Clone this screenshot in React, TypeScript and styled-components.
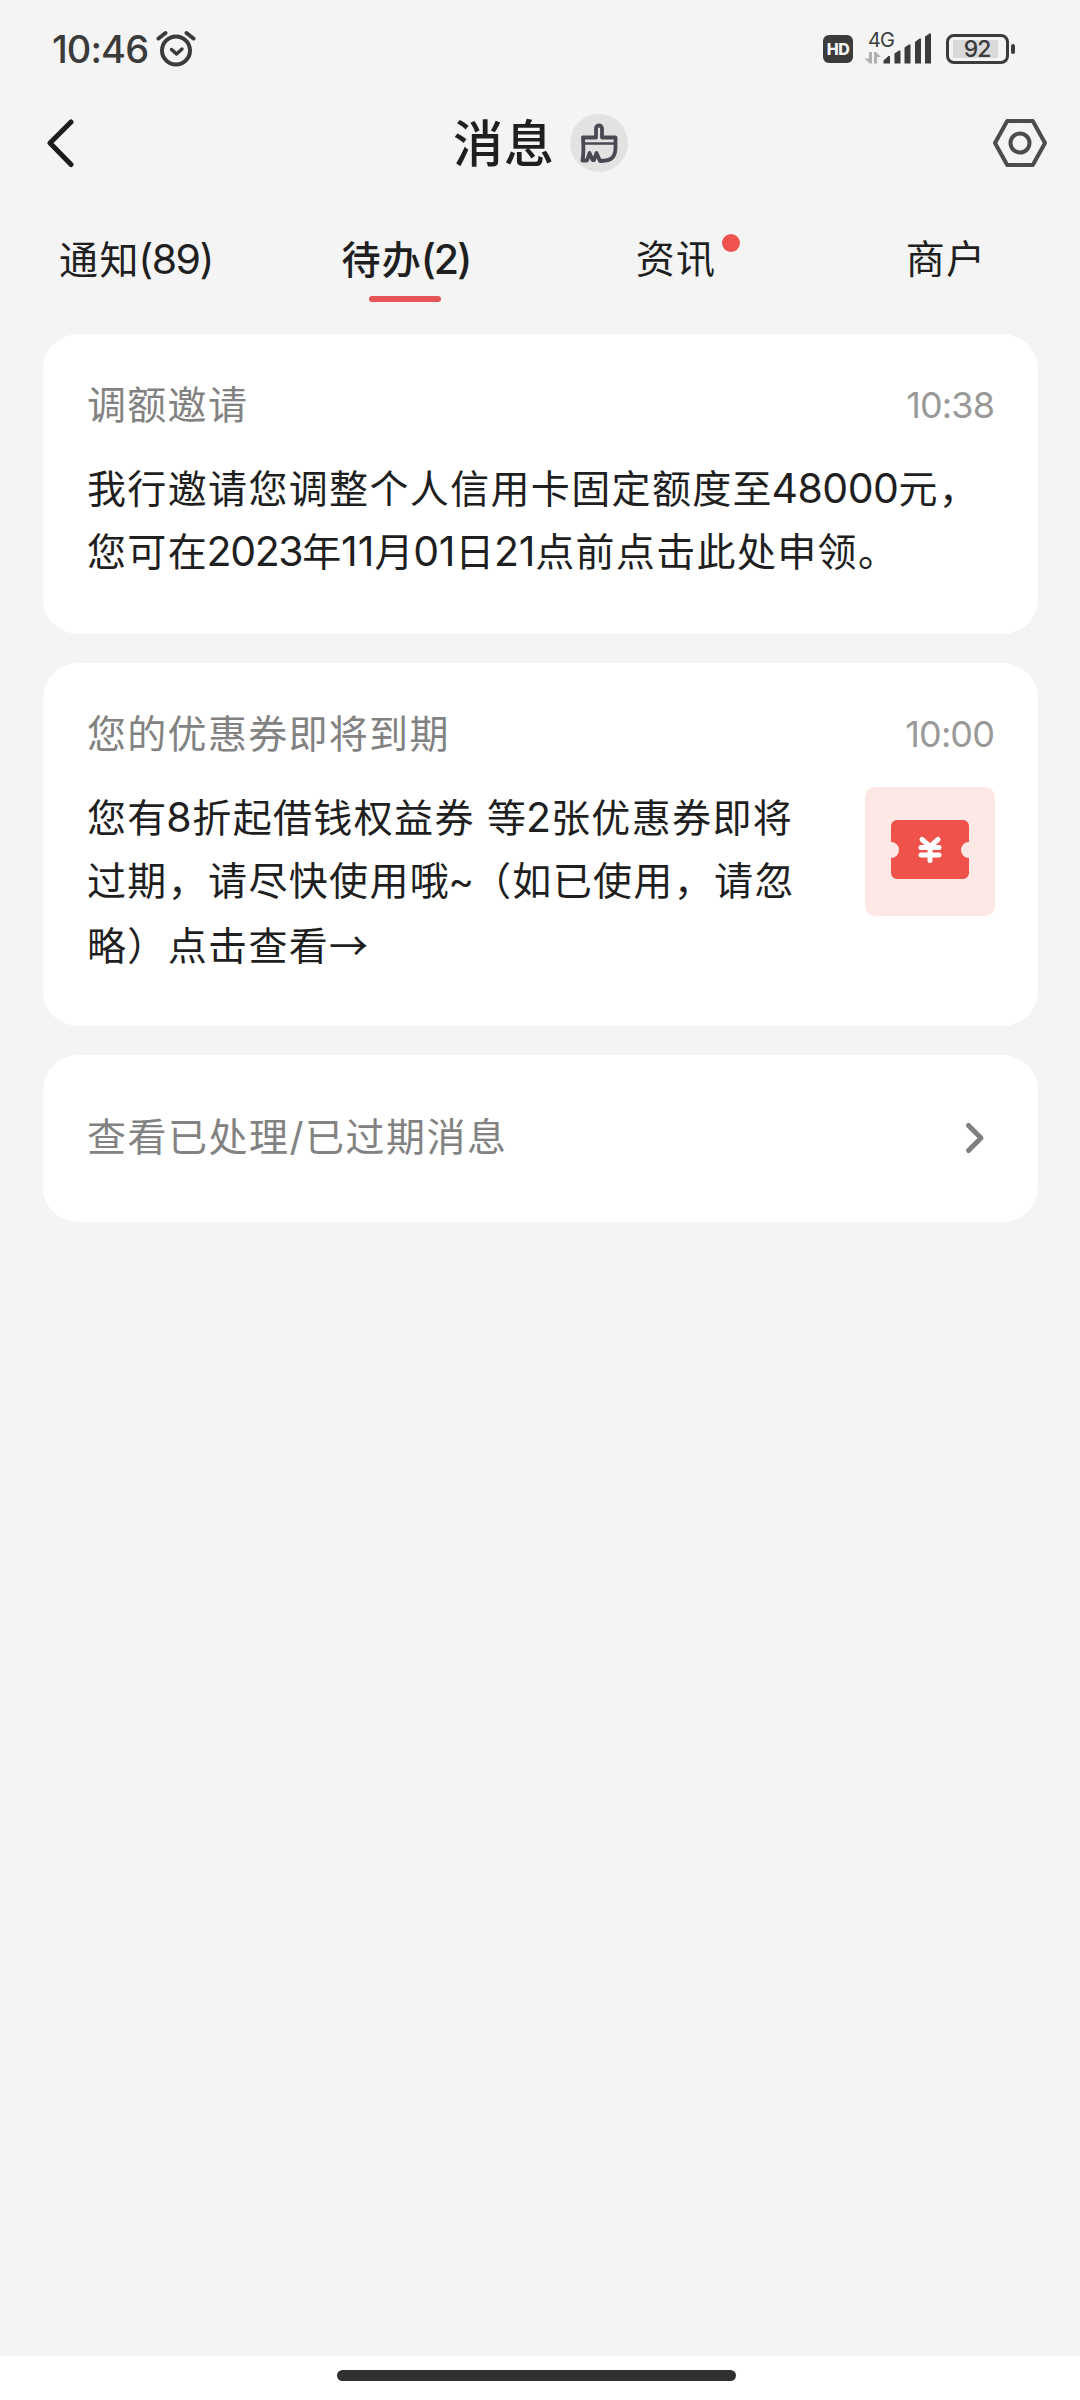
import React from "react";
import styled, { createGlobalStyle } from "styled-components";

const GlobalStyle = createGlobalStyle`
  body {
    margin: 0;
    background: #f4f4f4;
    font-family: Inter, "Noto Sans CJK SC", sans-serif;
    color: #1f1f1f;
  }
`;

const Screen = styled.div`
  width: 1080px;
  height: 2400px;
  display: flex;
  flex-direction: column;
  background: #f4f4f4;
  overflow: hidden;
`;

const StatusBar = styled.div`
  height: 98px;
  box-sizing: border-box;
  padding: 0 65px 0 52px;
  display: flex;
  align-items: center;
  color: #3b3b3b;
`;

const Clock = styled.span`
  font-size: 38px;
  font-weight: 500;
  line-height: 48px;
  width: 104px;
  letter-spacing: -0.9px;
  white-space: nowrap;
`;

const StatusRight = styled.div`
  margin-left: auto;
  display: flex;
  align-items: center;
`;

const HdBadge = styled.div`
  width: 30px;
  height: 28px;
  border-radius: 6px;
  background: #3b3b3b;
  color: #f4f4f4;
  font-size: 16px;
  font-weight: 800;
  line-height: 29px;
  text-align: center;
  letter-spacing: -0.5px;
  margin-right: 12px;
`;

const Signal = styled.div`
  position: relative;
  width: 67px;
  height: 34px;
  margin-right: 14px;
`;

const NetworkType = styled.span`
  position: absolute;
  left: 3px;
  top: -3px;
  font-size: 20px;
  line-height: 22px;
  letter-spacing: -0.8px;
`;

const Battery = styled.div`
  width: 63px;
  height: 30px;
  box-sizing: border-box;
  border: 3px solid #3b3b3b;
  border-radius: 8px;
  padding: 3px 4px;
  display: flex;
`;

const BatteryLevel = styled.div`
  flex: 0 0 45px;
  display: flex;
  align-items: center;
  justify-content: center;
  background: #d9d9d9;
  font-size: 23px;
  font-weight: 500;
  letter-spacing: -1.2px;
  padding-left: 3px;
  box-sizing: border-box;
`;

const BatteryTip = styled.div`
  width: 4px;
  height: 10px;
  border-radius: 2px;
  background: #3b3b3b;
  margin-left: 2px;
`;

const Header = styled.header`
  height: 90px;
  box-sizing: border-box;
  padding: 0 32px 0 46px;
  display: grid;
  grid-template-columns: 407px auto 1fr;
  align-items: center;
`;

const TitleGroup = styled.div`
  display: flex;
  align-items: center;
  gap: 15px;
`;

const Title = styled.h1`
  margin: 0;
  padding-top: 2px;
  font-size: 50px;
  font-weight: 500;
  line-height: 58px;
  letter-spacing: 1px;
`;

const CleanButton = styled.div`
  width: 58px;
  height: 58px;
  border-radius: 50%;
  background: #e2e2e3;
  display: flex;
  align-items: center;
  justify-content: center;
`;

const HeaderAction = styled.div`
  display: flex;
  justify-content: flex-end;
`;

const Tabs = styled.nav`
  display: grid;
  grid-template-columns: repeat(4, 270px);
  height: 146px;
`;

const Tab = styled.div<{ $active?: boolean }>`
  display: flex;
  flex-direction: column;
  align-items: center;
  padding-top: 46px;
  font-size: 39px;
  line-height: 50px;
  letter-spacing: 1.3px;
  font-weight: ${(p) => (p.$active ? 500 : 400)};
`;

const TabLabel = styled.span`
  position: relative;
  padding-left: 2px;
  white-space: nowrap;
`;

const TabUnderline = styled.span`
  width: 72px;
  height: 6px;
  border-radius: 3px;
  background: #e65457;
  margin-top: 11px;
`;

const Dot = styled.span`
  position: absolute;
  right: -24px;
  top: 0;
  width: 18px;
  height: 18px;
  border-radius: 50%;
  background: #ef5350;
`;

const List = styled.main`
  flex: 1;
  display: flex;
  flex-direction: column;
  gap: 29px;
  padding: 0 42px 0 43px;
`;

const Card = styled.section<{ $height: number }>`
  height: ${(p) => p.$height}px;
  box-sizing: border-box;
  padding: 46px 43px 0 44px;
  border-radius: 35px;
  background: #fff;
`;

const CardHead = styled.div`
  display: flex;
  justify-content: space-between;
  height: 50px;
  line-height: 50px;
`;

const CardTitle = styled.span`
  font-size: 39px;
  letter-spacing: 1.3px;
  color: #828282;
`;

const Time = styled.span`
  font-size: 36px;
  letter-spacing: -0.9px;
  margin-right: 1px;
  color: #999;
`;

const CardContent = styled.div`
  display: flex;
  justify-content: space-between;
  margin-top: 27px;
`;

const Message = styled.p`
  margin: 0;
  font-size: 39px;
  line-height: 63px;
  letter-spacing: 1.35px;
  white-space: nowrap;
`;

const Num = styled.span<{ $spacing: number }>`
  font-size: 41px;
  margin-left: -1.5px;
  letter-spacing: ${(p) => p.$spacing}px;
`;

const Tilde = styled.span`
  margin-left: -2px;
  letter-spacing: -2px;
`;

const Arrow = styled.span`
  font-family: "Noto Sans CJK SC", sans-serif;
`;

const CouponTile = styled.div`
  flex: 0 0 130px;
  height: 129px;
  margin-top: 1px;
  border-radius: 10px;
  background: #fde8e6;
  display: flex;
  justify-content: center;
  padding-top: 33px;
  box-sizing: border-box;
`;

const MoreCard = styled(Card)`
  display: flex;
  align-items: center;
  justify-content: space-between;
  padding: 0 52px 1px 44px;
`;

const MoreLabel = styled(CardTitle)`
  line-height: 50px;
  padding-bottom: 3px;
  letter-spacing: 1.5px;
`;

const NavBar = styled.footer`
  height: 44px;
  background: #fff;
  display: flex;
  justify-content: center;
  padding: 14px 7px 0 0;
  box-sizing: border-box;
`;

const HomeIndicator = styled.div`
  width: 399px;
  height: 11px;
  border-radius: 6px;
  background: #303030;
`;

const AlarmIcon = () => (
  <svg width="40" height="38" viewBox="0 0 40 38" fill="none" stroke="#3b3b3b" strokeWidth="4" strokeLinecap="round" strokeLinejoin="round">
    <circle cx="20" cy="20.5" r="14" />
    <path d="M15.500 19.500l5 4.500 5.500-5" strokeWidth="3.400" />
    <path d="M2.500 8.500L9.500 3M30.500 3L37.500 8.500" strokeWidth="4" />
  </svg>
);

const SignalBars = () => (
  <svg width="67" height="34" viewBox="0 0 67 34">
    <g fill="#3b3b3b">
      <path d="M18.500 31.500V28.500l5-4.500H25v7.500z" />
      <path d="M29.500 31.500V21.500l4.500-3h1.500v13z" />
      <path d="M39.500 31.500V15.500l4.500-3h1.500v19z" />
      <path d="M50 31.500V10l4.500-3.500H56v25z" />
      <path d="M60 31.500V4.500L64.500 1.500H66v30z" />
    </g>
    <g fill="#b0b0b0">
      <path d="M4 20h3v11.500H5L-.5 26.500h4.500z" />
      <path d="M9 31.500V20h2l5 5H12v6.500z" />
    </g>
  </svg>
);

const BackIcon = () => (
  <svg width="30" height="50" viewBox="0 0 30 50" fill="none" stroke="#1c1c1c" strokeWidth="5" strokeLinecap="round" strokeLinejoin="round">
    <path d="M25 4L4 25l21 21.500" />
  </svg>
);

const BroomIcon = () => (
  <svg width="40" height="42" viewBox="0 0 40 42" fill="none" stroke="#4a4852" strokeWidth="3.800" strokeLinejoin="round" strokeLinecap="round">
    <path d="M4 15.500H17V6.500a3 3 0 0 1 6 0v9H36.500V26q0 8-5 11-3 1.800-10.500 2l-3.500-8-2.500 7h-1.500L10.500 31 8 38.500H3.500Q5 31 4 15.500z" />
    <path d="M4.500 21.500H36" strokeWidth="2.400" />
  </svg>
);

const SettingsIcon = () => (
  <svg width="56" height="50" viewBox="0 0 56 50" fill="none" stroke="#4c4c4c" strokeWidth="4" strokeLinejoin="round">
    <path d="M15.200 3H40.800L53 25 40.800 47H15.200L3 25z" />
    <circle cx="28" cy="25" r="9.500" />
  </svg>
);

const CouponIcon = () => (
  <svg width="78" height="59" viewBox="0 0 78 59">
    <path d="M6 0H72a6 6 0 0 1 6 6V22a8 8 0 0 0 0 16V53a6 6 0 0 1-6 6H6a6 6 0 0 1-6-6V38a8 8 0 0 0 0-16V6a6 6 0 0 1 6-6z" fill="#ee524a" />
    <path d="M31 19.500L39 26.500 47 19.500M30 27.500H48M30 35H48M39 27V40.500" stroke="#fff" strokeWidth="5" strokeLinecap="round" fill="none" />
  </svg>
);

const ChevronIcon = () => (
  <svg width="22" height="34" viewBox="0 0 22 34" fill="none" stroke="#7f7f7f" strokeWidth="5" strokeLinecap="round" strokeLinejoin="round">
    <path d="M4.500 4.500L17 17 4.500 29.500" />
  </svg>
);

export default function App() {
  return (
    <Screen>
      <GlobalStyle />
      <StatusBar>
        <Clock>10:46</Clock>
        <AlarmIcon />
        <StatusRight>
          <HdBadge>HD</HdBadge>
          <Signal>
            <SignalBars />
            <NetworkType>4G</NetworkType>
          </Signal>
          <Battery>
            <BatteryLevel>92</BatteryLevel>
          </Battery>
          <BatteryTip />
        </StatusRight>
      </StatusBar>
      <Header>
        <BackIcon />
        <TitleGroup>
          <Title>消息</Title>
          <CleanButton>
            <BroomIcon />
          </CleanButton>
        </TitleGroup>
        <HeaderAction>
          <SettingsIcon />
        </HeaderAction>
      </Header>
      <Tabs>
        <Tab>
          <TabLabel>通知<Num $spacing={-1.5}>(89)</Num></TabLabel>
        </Tab>
        <Tab $active>
          <TabLabel>待办<Num $spacing={-1.9}>(2)</Num></TabLabel>
          <TabUnderline />
        </Tab>
        <Tab>
          <TabLabel>资讯<Dot /></TabLabel>
        </Tab>
        <Tab>
          <TabLabel>商户</TabLabel>
        </Tab>
      </Tabs>
      <List>
        <Card $height={300}>
          <CardHead>
            <CardTitle>调额邀请</CardTitle>
            <Time>10:38</Time>
          </CardHead>
          <CardContent>
            <Message>
              我行邀请您调整个人信用卡固定额度至<Num $spacing={-0.5}>48000</Num>元，
              <br />
              您可在<Num $spacing={-1.4}>2023</Num>年<Num $spacing={0}>11</Num>月<Num $spacing={-0.3}>01</Num>日<Num $spacing={-0.3}>21</Num>点前点击此处申领。
            </Message>
          </CardContent>
        </Card>
        <Card $height={363}>
          <CardHead>
            <CardTitle>您的优惠券即将到期</CardTitle>
            <Time>10:00</Time>
          </CardHead>
          <CardContent>
            <Message>
              您有<Num $spacing={0.7}>8</Num>折起借钱权益券 等<Num $spacing={0.1}>2</Num>张优惠券即将
              <br />
              过期，请尽快使用哦<Tilde>~</Tilde>（如已使用，请忽
              <br />
              略）点击查看<Arrow>→</Arrow>
            </Message>
            <CouponTile>
              <CouponIcon />
            </CouponTile>
          </CardContent>
        </Card>
        <MoreCard $height={167}>
          <MoreLabel>查看已处理/已过期消息</MoreLabel>
          <ChevronIcon />
        </MoreCard>
      </List>
      <NavBar>
        <HomeIndicator />
      </NavBar>
    </Screen>
  );
}
